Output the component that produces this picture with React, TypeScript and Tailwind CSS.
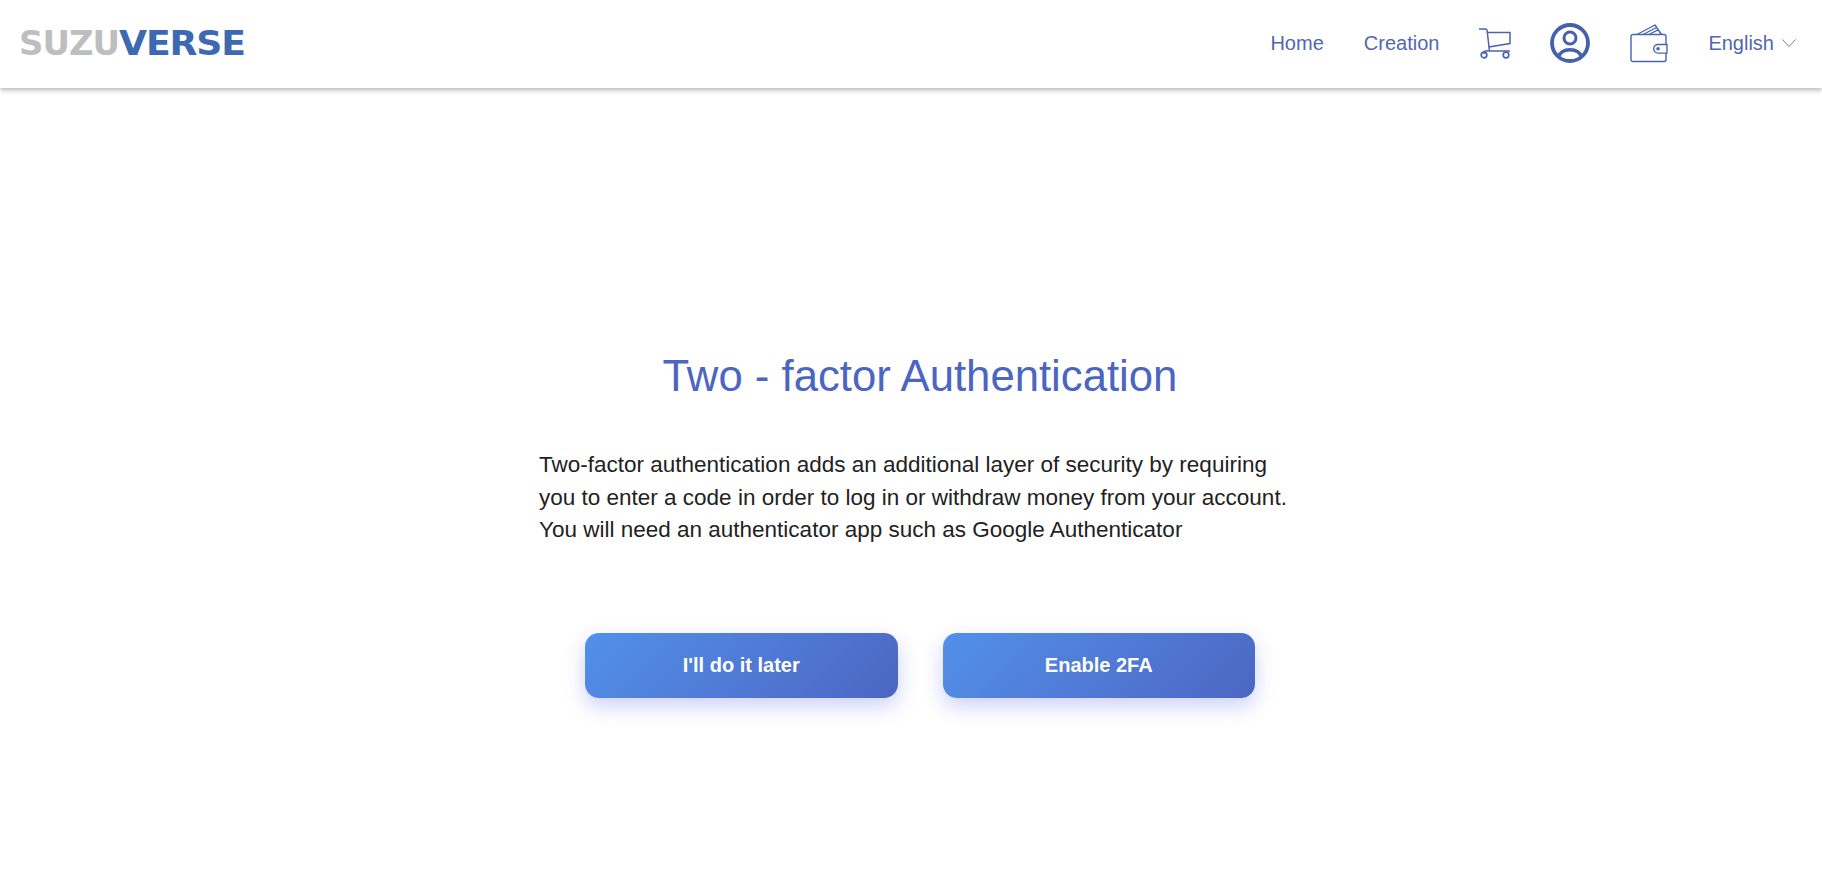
function Logo() {
  return (
    <svg width="228" height="40" viewBox="0 0 228 40" className="block">
      <text x="0" y="31" textLength="100" lengthAdjust="spacingAndGlyphs" letterSpacing="-1" fontFamily="'DejaVu Sans', sans-serif" fontSize="33" fontWeight="700" fill="#bcbec0">
        SUZU
      </text>
      <text x="100" y="31" textLength="126" lengthAdjust="spacingAndGlyphs" letterSpacing="-1" fontFamily="'DejaVu Sans', sans-serif" fontSize="33" fontWeight="700" fill="#3d69b0">
        VERSE
      </text>
    </svg>
  );
}

function CartIcon() {
  return (
    <svg width="32" height="31" viewBox="0 0 32 31" fill="none" stroke="#4a64b4" strokeWidth="1.5">
      <path d="M0 1h6.5c1 0 1.5.5 1.6 1.5L10.5 23" />
      <path d="M8.5 4.5H31v11L9.8 19" />
      <path d="M5 26v-1.5c0-1 .5-1.5 1.5-1.5H27" />
      <circle cx="5" cy="27" r="2.8" strokeWidth="1.7" />
      <circle cx="27" cy="27" r="2.8" strokeWidth="1.7" />
      <path d="M27 23h4" />
    </svg>
  );
}

function UserIcon() {
  return (
    <svg width="40" height="40" viewBox="0 0 40 40" fill="none" stroke="#4560ac" className="-ml-px">
      <circle cx="20" cy="20" r="18" strokeWidth="3.8" />
      <circle cx="20" cy="15" r="6" strokeWidth="3" />
      <path d="M8.5 34c1.5-5 6-7.3 11.5-7.3S30 29 31.5 34" strokeWidth="3.4" />
    </svg>
  );
}

function WalletIcon() {
  return (
    <svg width="38" height="39" viewBox="0 0 38 39" fill="none" stroke="#4a64b4" strokeWidth="1.4" strokeLinejoin="round">
      <path d="M3 10.5h31a2 2 0 0 1 2 2v23a2 2 0 0 1-2 2H3a2 2 0 0 1-2-2v-23a2 2 0 0 1 2-2Z" />
      <path d="M7 10.5 25 1l6.5 9.5" />
      <path d="M13 10.5 26.5 3.5" />
      <path d="M19 10.5 28 5.8" />
      <path d="M37 20.5h-9a4.3 4.3 0 0 0 0 8.6h9Z" fill="#fff" />
      <circle cx="28" cy="24.8" r="1.1" fill="#4a64b4" />
    </svg>
  );
}

function GradientButton({ label }: { label: string }) {
  return (
    <button
      type="button"
      className="h-[65px] w-[312.5px] rounded-[14px] bg-linear-[135deg] from-[#5290ea] to-[#4c66c2] text-[20px] font-bold text-white shadow-[0_8px_20px_rgba(90,100,240,0.3)]"
    >
      {label}
    </button>
  );
}

export default function App() {
  return (
    <div className="min-h-[880px] bg-white font-['Liberation_Sans',Arial,sans-serif]">
      <header className="flex h-[88px] items-center justify-between bg-white pl-[19px] pr-[26px] shadow-[0_2px_5px_rgba(0,0,0,0.3)]">
        <Logo />
        <nav className="flex items-center gap-[40px] pb-[2px] text-[20px] text-[#4f67b5]">
          <a>Home</a>
          <a>Creation</a>
          <CartIcon />
          <UserIcon />
          <WalletIcon />
          <span className="flex items-center gap-[8px]">
            English
            <svg width="14" height="8" viewBox="0 0 14 8" fill="none" stroke="#6a7fc4" strokeWidth="1">
              <path d="M0.5 0.5 7 7.5l6.5-7" />
            </svg>
          </span>
        </nav>
      </header>
      <main className="flex flex-col items-center pl-[18px] pt-[256px]">
        <h1 className="text-[43.7px] leading-[64px] text-[#4a66c2]">Two - factor Authentication</h1>
        <p className="mt-[41px] w-[762px] text-[22.5px] leading-[32.5px] text-[#222222]">
          Two-factor authentication adds an additional layer of security by requiring
          <br />
          you to enter a code in order to log in or withdraw money from your account.
          <br />
          You will need an authenticator app such as Google Authenticator
        </p>
        <div className="mt-[86px] flex gap-[45px]">
          <GradientButton label="I'll do it later" />
          <GradientButton label="Enable 2FA" />
        </div>
      </main>
    </div>
  );
}
